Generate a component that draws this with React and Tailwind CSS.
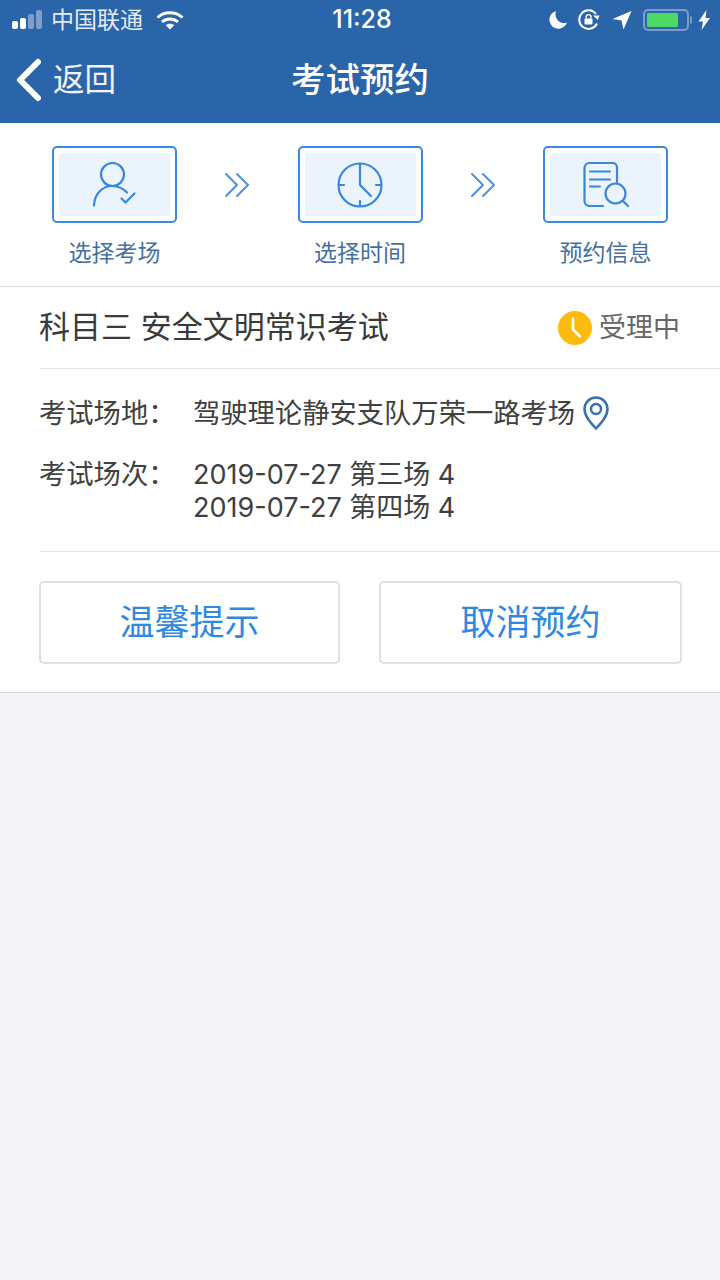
const FONT = '"Inter", "Noto Sans CJK SC", sans-serif';

function SignalBars() {
  return (
    <svg width="34" height="22" viewBox="0 0 34 22">
      <rect x="0" y="12" width="6" height="8" rx="2" fill="#fff" />
      <rect x="8" y="9" width="6" height="11" rx="2" fill="#fff" />
      <rect x="16" y="5" width="6" height="15" rx="2" fill="#7f9fc8" />
      <rect x="24" y="1" width="6" height="19" rx="2" fill="#7f9fc8" />
    </svg>
  );
}

function Wifi() {
  return (
    <svg width="28" height="20" viewBox="0 0 28 20" fill="none" stroke="#fff" strokeWidth="3">
      <path d="M1.5 7.5C8.5 1 19.5 1 26.5 7.5" />
      <path d="M6 12c4.500-4 11.500-4 16 0" />
      <path d="M14 19.500 9.800 15.200c2.400-2 6-2 8.400 0z" fill="#fff" stroke="none" />
    </svg>
  );
}

function StatusRight() {
  return (
    <div className="flex items-center justify-end">
      {/* moon */}
      <svg width="20" height="20" viewBox="0 0 20 20" className="mr-[10px]">
        <path d="M8 1a9 9 0 1 0 11 11.500C13 15 5.500 9 8 1z" fill="#fff" />
      </svg>
      {/* rotation lock */}
      <svg width="22" height="22" viewBox="0 0 22 22" fill="none" className="mr-[12px]">
        <path d="M19 14.500A9.300 9.300 0 1 1 18 5" stroke="#fff" strokeWidth="2" />
        <path d="M15 6.500h6.500L19.800 11z" fill="#fff" />
        <rect x="6.500" y="9.500" width="8" height="6" rx="1" fill="#fff" />
        <path d="M8.200 9.500V8a2.400 2.400 0 0 1 4.800 0v1.500" stroke="#fff" strokeWidth="1.400" />
      </svg>
      {/* location arrow */}
      <svg width="20" height="20" viewBox="0 0 20 20" className="mr-[11px]">
        <path d="M19.500 1 11.500 19.500 9.500 10.500 0.500 9z" fill="#fff" />
      </svg>
      {/* battery */}
      <div className="flex h-[22px] w-[46px] items-center rounded-[5px] border-2 border-[#7c9cc9] p-[2px]">
        <div className="h-full w-[31px] rounded-[1px] bg-[#4cd964]" />
      </div>
      <div className="ml-[1px] h-[8px] w-[2px] rounded-r-sm bg-[#7c9cc9]" />
      <svg width="13" height="20" viewBox="0 0 13 20" className="ml-[6px] mr-[9px]">
        <path d="M8.500 0 0.500 11.500h4.500L3.500 20l8.500-12H7.500z" fill="#fff" />
      </svg>
    </div>
  );
}

function Chevrons() {
  return (
    <svg width="26" height="26" viewBox="0 0 26 26" fill="none" stroke="#4f92de" strokeWidth="2" strokeLinecap="round" strokeLinejoin="round">
      <path d="M2 2l11 11L2 24" />
      <path d="M13 2l11 11-11 11" />
    </svg>
  );
}

function UserCheckIcon() {
  return (
    <svg width="44" height="46" viewBox="0 0 44 46" fill="none" stroke="#3a86dc" strokeWidth="2.200" strokeLinecap="round" strokeLinejoin="round">
      <circle cx="19.500" cy="12.500" r="11.500" />
      <path d="M1 43.500C1.500 32 9 24 19.500 24c5.500 0 10.500 2.500 14.500 6.500" />
      <path d="M28.500 36.500l4 4 9-9" />
    </svg>
  );
}

function ClockIcon() {
  return (
    <svg width="46" height="46" viewBox="0 0 46 46" fill="none" stroke="#3a86dc" strokeWidth="2.200" strokeLinecap="round" strokeLinejoin="round">
      <circle cx="23" cy="23" r="21.500" />
      <path d="M23 39v5M2 23h5M39 23h5" />
      <path d="M23 2v21l11 11" />
    </svg>
  );
}

function DocSearchIcon() {
  return (
    <svg width="46" height="46" viewBox="0 0 46 46" fill="none" stroke="#3a86dc" strokeWidth="2.200" strokeLinecap="round" strokeLinejoin="round">
      <path d="M20 44H6a5 5 0 0 1-4.500-5V6A5 5 0 0 1 6 1h23.500a4.500 4.500 0 0 1 4.500 4.500V20" />
      <path d="M7 9.500h20M7 17.500h20M7 24.500h10" />
      <circle cx="32.500" cy="31.500" r="10" />
      <path d="M40 39l5 5" />
    </svg>
  );
}

function Step({ label, children }) {
  return (
    <div className="flex w-[125px] flex-col items-center">
      <div className="flex h-[77px] w-[125px] items-center justify-center rounded-[5px] border-2 border-[#3a8ae2] bg-white p-[5px]">
        <div className="flex h-full w-full items-center justify-center rounded-[3px] bg-[#ebf4fd]">
          {children}
        </div>
      </div>
      <div className="mt-[14px] text-[23px] leading-[32px] whitespace-nowrap text-[#44709f]">{label}</div>
    </div>
  );
}

function PinIcon() {
  return (
    <svg width="26" height="34" viewBox="0 0 26 34" fill="none" stroke="#3a70ad" strokeWidth="2.500">
      <path d="M13 32.500C7 26 1.500 20 1.500 13a11.500 11.500 0 0 1 23 0c0 7-5.500 13-11.500 19.500z" />
      <circle cx="13" cy="13" r="5" />
    </svg>
  );
}

export default function App() {
  return (
    <div className="flex min-h-[1280px] flex-col bg-[#f3f3f8]" style={{ fontFamily: FONT }}>
      {/* status + nav */}
      <header className="h-[123px] bg-[#2b65a9] text-white">
        <div className="grid h-[40px] grid-cols-3 items-center">
          <div className="flex items-center pl-[12px]">
            <SignalBars />
            <span className="ml-[5px] text-[23px] whitespace-nowrap text-[#e4ecf6]">中国联通</span>
            <span className="ml-[13px]"><Wifi /></span>
          </div>
          <div className="pl-[4px] text-center text-[25px] font-medium">11:28</div>
          <StatusRight />
        </div>
        <div className="grid h-[80px] grid-cols-3 items-center">
          <div className="flex items-center pl-[16px]">
            <svg width="26" height="44" viewBox="0 0 26 44" fill="none" stroke="#fff" strokeWidth="6" strokeLinecap="round" strokeLinejoin="round">
              <path d="M22 4 4 22l18 18" />
            </svg>
            <span className="ml-[11px] text-[31.500px] whitespace-nowrap text-[#f0f5fb]">返回</span>
          </div>
          <div className="text-center text-[34.500px] font-medium whitespace-nowrap">考试预约</div>
        </div>
      </header>

      {/* steps */}
      <section className="flex h-[164px] items-start justify-between border-b border-[#d6d6da] bg-white px-[52px] pt-[23px]">
        <Step label="选择考场"><UserCheckIcon /></Step>
        <div className="mt-[26px]"><Chevrons /></div>
        <Step label="选择时间"><ClockIcon /></Step>
        <div className="mt-[26px]"><Chevrons /></div>
        <Step label="预约信息"><DocSearchIcon /></Step>
      </section>

      {/* card */}
      <section className="border-b border-[#d6d6da] bg-white pl-[39px]">
        <div className="flex h-[82px] items-center justify-between border-b border-[#e5e5e8] pr-[40px]">
          <div className="text-[31px] whitespace-nowrap text-[#3a3a3a]">科目三 安全文明常识考试</div>
          <div className="flex items-center">
            <svg width="34" height="34" viewBox="0 0 34 34" className="mr-[7px]">
              <circle cx="17" cy="17" r="17" fill="#fdbc0d" />
              <path d="M15 7.500v11l7 7" fill="none" stroke="#fff" strokeWidth="2.500" strokeLinecap="round" strokeLinejoin="round" />
            </svg>
            <span className="translate-y-[1px] text-[27px] whitespace-nowrap text-[#666]">受理中</span>
          </div>
        </div>

        <div className="h-[183px] border-b border-[#e5e5e8] pt-[27px] text-[27.300px] leading-[33px] text-[#404040]">
          <div className="flex items-center">
            <div className="w-[154px] whitespace-nowrap">考试场地：</div>
            <div className="whitespace-nowrap">驾驶理论静安支队万荣一路考场</div>
            <span className="ml-[8px]"><PinIcon /></span>
          </div>
          <div className="mt-[28px] flex">
            <div className="w-[154px] whitespace-nowrap">考试场次：</div>
            <div className="text-[27px] whitespace-nowrap">
              <div>2019-07-27 第三场 4</div>
              <div>2019-07-27 第四场 4</div>
            </div>
          </div>
        </div>

        <div className="flex h-[140px] items-start gap-[39px] pt-[29px]">
          <button className="h-[83px] w-[301px] rounded-[5px] border-2 border-[#e0e0e0] bg-white text-[35px] text-[#2f88e0]">温馨提示</button>
          <button className="h-[83px] w-[303px] rounded-[5px] border-2 border-[#e0e0e0] bg-white text-[35px] text-[#2f88e0]">取消预约</button>
        </div>
      </section>
    </div>
  );
}
